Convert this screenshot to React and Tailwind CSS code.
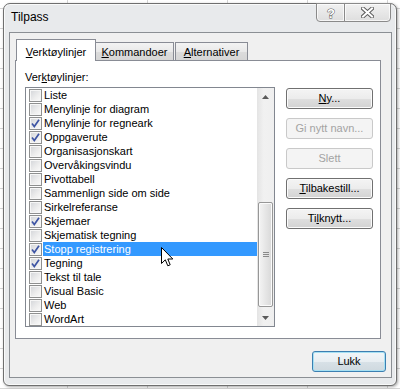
const items = [
  ["Liste", false],
  ["Menylinje for diagram", false],
  ["Menylinje for regneark", true],
  ["Oppgaverute", true],
  ["Organisasjonskart", false],
  ["Overvåkingsvindu", false],
  ["Pivottabell", false],
  ["Sammenlign side om side", false],
  ["Sirkelreferanse", false],
  ["Skjemaer", true],
  ["Skjematisk tegning", false],
  ["Stopp registrering", true],
  ["Tegning", true],
  ["Tekst til tale", false],
  ["Visual Basic", false],
  ["Web", false],
  ["WordArt", false],
];

const btn =
  "flex h-[21px] w-[87px] items-center justify-center rounded-[3px] border border-[#707070] bg-[linear-gradient(to_bottom,#f4f4f4_0%,#ececec_50%,#dfdfdf_51%,#d3d3d3_100%)] text-[11px] leading-none text-black shadow-[inset_0_0_0_1px_#fbfbfb]";
const btnOff =
  "flex h-[21px] w-[87px] items-center justify-center rounded-[3px] border border-[#c9c9c9] bg-[#f4f4f4] text-[11px] leading-none text-[#a3a3a3]";

function CheckBox({ on }) {
  return (
    <div className="mt-px flex h-[13px] w-[13px] shrink-0 items-center justify-center border border-[#8e8f8f] bg-[linear-gradient(135deg,#d2d4d8_0%,#eeeeee_60%,#fafafa_100%)] shadow-[inset_0_0_0_1px_#f6f6f6]">
      {on && (
        <svg width="11" height="11" viewBox="0 0 11 11">
          <path d="M2 5.5 L4.3 8.5 L9 1.8" fill="none" stroke="#3e55a4" strokeWidth="1.7" />
        </svg>
      )}
    </div>
  );
}

function Row({ label, on }) {
  const sel = label === "Stopp registrering";
  return (
    <div className="flex h-[14px] items-start pl-[3px]">
      <CheckBox on={on} />
      <div className={`ml-px h-[14px] flex-1 pl-px leading-[14px] ${sel ? "bg-[#3399ff] text-white" : "text-black"}`}>
        {label}
      </div>
    </div>
  );
}

function ScrollBar() {
  return (
    <div className="flex w-[17px] flex-col bg-[linear-gradient(to_right,#e4e4e4,#f1f1f1_40%,#efefef)]">
      <div className="flex h-[17px] items-center justify-center">
        <svg width="7" height="4" viewBox="0 0 7 4">
          <path d="M0 4 L3.5 0 L7 4 Z" fill="#5a5a5a" />
        </svg>
      </div>
      <div className="flex-1">
        <div className="mx-px mt-[97px] flex h-[105px] flex-col items-center justify-center gap-[1px] rounded-[2px] border border-[#979797] bg-[linear-gradient(to_right,#f4f4f4,#e6e6e6_50%,#d8d8d8)] shadow-[inset_0_0_0_1px_#fbfbfb]">
          <div className="h-px w-[6px] bg-[#8a8a8a]" />
          <div className="h-px w-[6px] bg-[#8a8a8a]" />
          <div className="h-px w-[6px] bg-[#8a8a8a]" />
        </div>
      </div>
      <div className="flex h-[17px] items-center justify-center">
        <svg width="7" height="4" viewBox="0 0 7 4">
          <path d="M0 0 L3.5 4 L7 0 Z" fill="#5a5a5a" />
        </svg>
      </div>
    </div>
  );
}

export default function App() {
  return (
    <div className="relative h-[389px] w-[400px] overflow-hidden bg-white bg-[linear-gradient(to_right,#d6d6d6_1px,transparent_1px),linear-gradient(to_bottom,#d6d6d6_1px,transparent_1px)] bg-[size:80px_20px] bg-[position:-13px_8px] pl-[3px] pt-[3px] font-['Liberation_Sans',Arial,sans-serif]">
      <div className="flex h-[383px] w-[394px] flex-col rounded-t-[7px] rounded-b-[6px] border border-[#6f6f6f] bg-[#e8eaec] shadow-[inset_0_0_0_1px_rgba(255,255,255,0.75),1px_1px_3px_rgba(0,0,0,0.35)]">
        {/* title bar */}
        <div className="flex h-[28px] items-start justify-between">
          <div className="pl-[7px] pt-[5px] text-[12px] leading-[16px] text-black">Tilpass</div>
          <div className="-mt-px mr-[5px] flex">
            <div className="flex h-[19px] w-[29px] items-center justify-center rounded-bl-[4px] border border-[#8a8a8a] bg-[linear-gradient(to_bottom,#f1f1f1,#dedede)] shadow-[inset_0_0_0_1px_rgba(255,255,255,0.7)]">
              <svg width="12" height="14" viewBox="0 0 12 14">
                <text x="6" y="12" textAnchor="middle" fontSize="13" fontWeight="bold" fontFamily="Liberation Sans, Arial, sans-serif" fill="#fff" stroke="#5e5e5e" strokeWidth="1" paintOrder="stroke">
                  ?
                </text>
              </svg>
            </div>
            <div className="-ml-px flex h-[19px] w-[47px] items-center justify-center rounded-br-[4px] border border-[#8a8a8a] bg-[linear-gradient(to_bottom,#f1f1f1,#dedede)] shadow-[inset_0_0_0_1px_rgba(255,255,255,0.7)]">
              <svg width="13" height="11" viewBox="0 0 13 11">
                <path d="M2 1.5 L11 9.5 M11 1.5 L2 9.5" stroke="#5e5e5e" strokeWidth="4" strokeLinecap="square" />
                <path d="M2 1.5 L11 9.5 M11 1.5 L2 9.5" stroke="#ffffff" strokeWidth="2" strokeLinecap="square" />
              </svg>
            </div>
          </div>
        </div>

        {/* client area */}
        <div className="ml-[5px] mr-[4px] flex h-[346px] flex-col border border-[#8b8f94] bg-[#f0f0f0] text-[11px]">
          <div className="ml-[5px] mt-[6px] w-[366px]">
            {/* tabs */}
            <div className="relative z-10 flex h-[21px] items-end pl-px">
              <div className="-mb-px flex h-[22px] w-[80px] items-center justify-center border border-b-0 border-[#898c95] bg-white pt-[4px]">
                <span>
                  <u>V</u>erktøylinjer
                </span>
              </div>
              <div className="flex h-[18px] w-[78px] items-center justify-center border border-l-0 border-b-0 border-[#898c95] bg-[linear-gradient(to_bottom,#f3f3f3,#e9e9e9_50%,#dcdcdc_51%,#d6d6d6)] pt-px">
                <span>
                  <u>K</u>ommandoer
                </span>
              </div>
              <div className="ml-px flex h-[18px] w-[73px] items-center justify-center border border-b-0 border-[#898c95] bg-[linear-gradient(to_bottom,#f3f3f3,#e9e9e9_50%,#dcdcdc_51%,#d6d6d6)] pt-px">
                <span>
                  <u>A</u>lternativer
                </span>
              </div>
            </div>

            {/* panel */}
            <div className="h-[279px] border border-[#898c95] bg-white pl-[9px]">
              <div className="mt-[9px] h-[14px] leading-[14px]">
                Ver<u>k</u>tøylinjer:
              </div>
              <div className="mt-[3px] flex items-start">
                <div className="flex h-[240px] w-[250px] border border-[#828790] bg-white">
                  <div className="flex-1">
                    {items.map(([label, on]) => (
                      <Row key={label} label={label} on={on} />
                    ))}
                  </div>
                  <ScrollBar />
                </div>
                <div className="ml-[11px] mt-px flex flex-col gap-[9px]">
                  <div className={btn}>
                    <span>
                      <u>N</u>y...
                    </span>
                  </div>
                  <div className={btnOff}>Gi nytt navn...</div>
                  <div className={btnOff}>Slett</div>
                  <div className={btn}>
                    <span>
                      <u>T</u>ilbakestill...
                    </span>
                  </div>
                  <div className={btn}>
                    <span>
                      Ti<u>l</u>knytt...
                    </span>
                  </div>
                </div>
              </div>
            </div>
          </div>

          <div className="mr-[5px] mt-[12px] flex justify-end">
            <div className="flex h-[21px] w-[74px] items-center justify-center rounded-[3px] border border-[#3c7fb1] bg-[linear-gradient(to_bottom,#f2f6f8_0%,#e8eef2_50%,#d8e1e7_51%,#cfd9df_100%)] text-[11px] text-black shadow-[inset_0_0_0_1px_#a6e0f3]">
              Lukk
            </div>
          </div>
        </div>
      </div>

      {/* mouse cursor */}
      <svg className="absolute left-[161px] top-[247px]" width="13" height="21" viewBox="0 0 13 21">
        <path d="M0.5 0.5 L0.5 16.5 L4.3 12.8 L6.8 18.8 L9.2 17.8 L6.8 12 L11.8 12 Z" fill="#ffffff" stroke="#000000" strokeWidth="1" strokeLinejoin="miter" />
      </svg>
    </div>
  );
}
